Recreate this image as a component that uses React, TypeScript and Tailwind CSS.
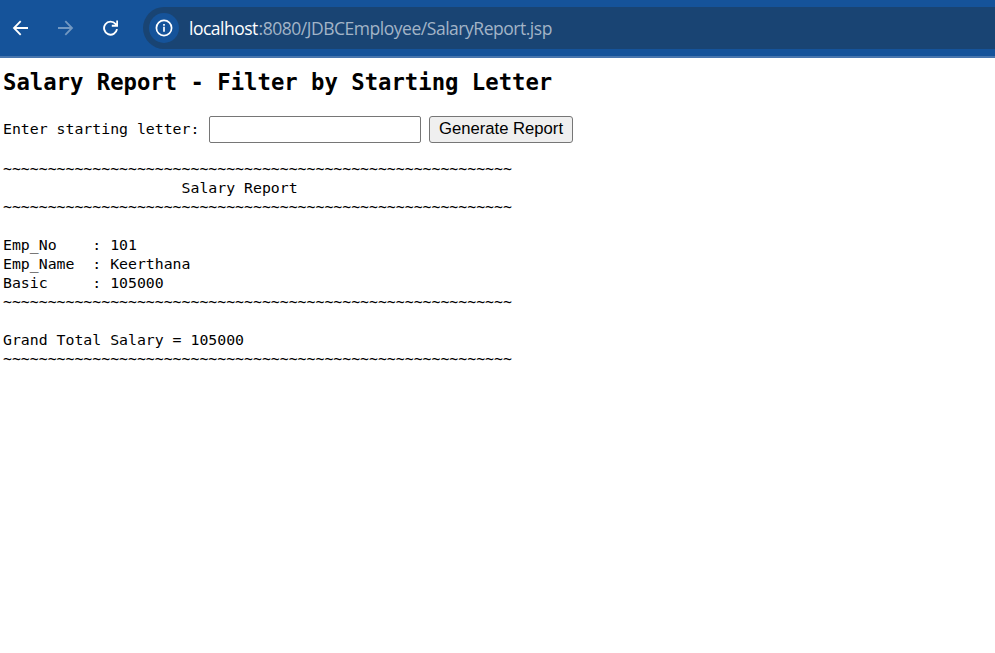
const TILDES = "~".repeat(57);

const report = [
  TILDES,
  "                    Salary Report",
  TILDES,
  "",
  "Emp_No    : 101",
  "Emp_Name  : Keerthana",
  "Basic     : 105000",
  TILDES,
  "",
  "Grand Total Salary = 105000",
  TILDES,
].join("\n");

function BrowserBar() {
  return (
    <header className="flex h-[58px] items-center border-b-2 border-[#4876ae] bg-[#15539a] text-white">
      <svg className="ml-3 h-4 w-4 shrink-0" viewBox="0 0 16 16" fill="none" stroke="currentColor" strokeWidth="1.8">
        <path d="M16 8H2.2M8.7 1.2 2 8l6.7 6.8" />
      </svg>
      <svg className="ml-[30px] h-4 w-4 shrink-0 text-[#7298c2]" viewBox="0 0 16 16" fill="none" stroke="currentColor" strokeWidth="1.8">
        <path d="M0 8h13.8M7.3 1.2 14 8l-6.7 6.8" />
      </svg>
      <svg className="ml-7 h-4 w-4 shrink-0" viewBox="0 0 16 16" fill="none" stroke="currentColor" strokeWidth="1.9">
        <path d="M15 9.2A6.5 6.5 0 1 1 13.6 4L14.7 5.2M15.2 0.5v5.3H9.8" />
      </svg>
      <div className="ml-[25px] flex h-[42px] flex-1 items-center rounded-l-full bg-[#194473] pl-1.5">
        <span className="flex h-[30px] w-[30px] items-center justify-center rounded-full bg-[#15539a]">
          <svg className="h-[18px] w-[18px]" viewBox="0 0 18 18" fill="none" stroke="currentColor" strokeWidth="1.7">
            <circle cx="9" cy="9" r="7.6" />
            <path d="M9 7.8v5M9 5v1.7" />
          </svg>
        </span>
        <span className="ml-2.5 flex font-['Open_Sans','Noto_Sans',sans-serif] text-[17.5px] leading-6 whitespace-nowrap">
          <span className="w-[69.5px] tracking-[-0.5px]">localhost</span>
          <span className="tracking-[-0.47px] text-[#a3b4c7]">:8080/JDBCEmployee/SalaryReport.jsp</span>
        </span>
      </div>
    </header>
  );
}

export default function App() {
  return (
    <div className="h-screen overflow-hidden bg-white font-['DejaVu_Sans_Mono',monospace] text-black">
      <BrowserBar />
      <main className="pt-2.5 pl-[3px]">
        <h2 className="text-[22.25px] leading-7 font-bold whitespace-nowrap">
          Salary Report - Filter by Starting Letter
        </h2>
        <form className="mt-5 flex h-[27px] items-center" onSubmit={(e) => e.preventDefault()}>
          <label htmlFor="letter" className="w-[206px] pb-0.5 text-[14.84px] leading-[19px] whitespace-nowrap">
            Enter starting letter:
          </label>
          <input
            id="letter"
            type="text"
            className="h-[27px] w-[212px] rounded-[2px] border border-[#767676] bg-white px-1 outline-none"
          />
          <button
            type="submit"
            className="ml-2 h-[27px] w-36 rounded-[3px] border border-[#767676] bg-[#efefef] pb-0.5 font-['Liberation_Sans',Arial,sans-serif] text-[16.67px] leading-5 whitespace-nowrap"
          >
            Generate Report
          </button>
        </form>
        <pre className="mt-4 font-['DejaVu_Sans_Mono',monospace] text-[14.84px] leading-[19px]">{report}</pre>
      </main>
    </div>
  );
}
